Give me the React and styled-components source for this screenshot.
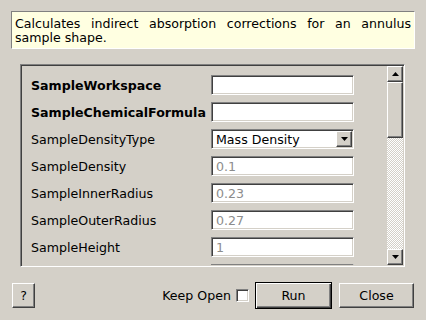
import React from 'react';
import styled, { createGlobalStyle, css } from 'styled-components';

const Global = createGlobalStyle`
  html, body { margin: 0; padding: 0; background: #d4d0c8; }
  body {
    font-family: "DejaVu Sans", "Liberation Sans", sans-serif;
    font-size: 12.6px;
    color: #000;
  }
  #root { width: 426px; height: 320px; }
`;

const sunken = css`
  border: 1px solid;
  border-color: #808080 #ffffff #ffffff #808080;
  box-shadow: inset 1px 1px 0 #404040, inset -1px -1px 0 #d4d0c8;
`;

const raised = css`
  border: 1px solid;
  border-color: #ffffff #404040 #404040 #ffffff;
  box-shadow: inset -1px -1px 0 #808080;
`;

const Dialog = styled.div`
  width: 426px;
  height: 320px;
  box-sizing: border-box;
  padding: 11px 11px 0 11px;
  display: flex;
  flex-direction: column;
  background: #d4d0c8;
`;

const Description = styled.div`
  background: #ffffe1;
  border: 1px solid;
  border-color: #808080 #ffffff #ffffff #808080;
  padding: 5px 3px 3px 3px;
  line-height: 14px;
`;

const DescLine = styled.div`
  text-align: ${p => (p.$justify ? 'justify' : 'left')};
  text-align-last: ${p => (p.$justify ? 'justify' : 'auto')};
  white-space: nowrap;
`;

const Panel = styled.div`
  margin: 15px 10px 0 9px;
  height: 203px;
  box-sizing: border-box;
  ${sunken};
  padding: 1px;
  display: flex;
  overflow: hidden;
`;

const Content = styled.div`
  flex: 1;
  overflow: hidden;
  padding: 9px 0 0 9px;
  display: grid;
  grid-template-columns: 180px 143px;
  grid-auto-rows: 20px;
  row-gap: 7px;
  align-content: start;
`;

const Label = styled.div`
  display: flex;
  align-items: center;
  font-weight: ${p => (p.$required ? 'bold' : 'normal')};
  white-space: nowrap;
`;

const TextBox = styled.div`
  box-sizing: border-box;
  height: 20px;
  ${sunken};
  padding: 0 0 0 4px;
  background: #fff;
  color: ${p => (p.$muted ? '#8c8c8c' : '#000')};
  display: flex;
  align-items: center;
`;

const Combo = styled(TextBox)`
  padding-right: 1px;
  justify-content: space-between;
`;

const DropButton = styled.div`
  width: 16px;
  height: 16px;
  box-sizing: border-box;
  ${raised};
  background: #d4d0c8;
  display: flex;
  align-items: center;
  justify-content: center;
`;

const Scrollbar = styled.div`
  width: 16px;
  display: flex;
  flex-direction: column;
`;

const ScrollButton = styled.div`
  height: 16px;
  box-sizing: border-box;
  ${raised};
  background: #d4d0c8;
  display: flex;
  align-items: center;
  justify-content: center;
`;

const Thumb = styled.div`
  height: 56px;
  box-sizing: border-box;
  ${raised};
  background: #d4d0c8;
`;

const Track = styled.div`
  flex: 1;
  background: repeating-conic-gradient(#ffffff 0 25%, #d4d0c8 0 50%) 0 0 / 2px 2px;
`;

const ButtonRow = styled.div`
  margin-top: 15px;
  height: 27px;
  padding: 0 1px;
  display: flex;
  align-items: center;
`;

const Spacer = styled.div`
  flex: ${p => (p.$w ? `0 0 ${p.$w}px` : '1')};
`;

const PushButton = styled.button`
  font-family: inherit;
  font-size: 12.6px;
  color: #000;
  background: #d4d0c8;
  box-sizing: border-box;
  height: 25px;
  width: ${p => p.$w}px;
  padding: 0;
  margin: 0;
  ${raised};
  ${p =>
    p.$default &&
    css`
      height: 27px;
      outline: none;
      border: 1px solid #000;
      box-shadow: inset 1px 1px 0 #fff, inset -1px -1px 0 #404040, inset -2px -2px 0 #808080;
    `}
`;

const CheckLabel = styled.label`
  display: flex;
  align-items: center;
  gap: 5px;
  margin-right: 6px;
  white-space: nowrap;
`;

const CheckBox = styled.span`
  width: 13px;
  height: 13px;
  box-sizing: border-box;
  ${sunken};
  background: #fff;
`;

const Arrow = ({ up }) => (
  <svg width="7" height="4" viewBox="0 0 7 4">
    <path d={up ? 'M3.5 0 L7 4 L0 4 Z' : 'M0 0 L7 0 L3.5 4 Z'} fill="#000" />
  </svg>
);

const rows = [
  { label: 'SampleWorkspace', required: true, value: '' },
  { label: 'SampleChemicalFormula', required: true, value: '' },
  { label: 'SampleDensityType', combo: 'Mass Density' },
  { label: 'SampleDensity', value: '0.1', muted: true },
  { label: 'SampleInnerRadius', value: '0.23', muted: true },
  { label: 'SampleOuterRadius', value: '0.27', muted: true },
  { label: 'SampleHeight', value: '1', muted: true },
  { label: '', value: '', muted: true },
];

export default function App() {
  return (
    <>
      <Global />
      <Dialog>
        <Description>
          <DescLine $justify>Calculates indirect absorption corrections for an annulus</DescLine>
          <DescLine>sample shape.</DescLine>
        </Description>
        <Panel>
          <Content>
            {rows.map((r, i) => (
              <React.Fragment key={i}>
                <Label $required={r.required}>{r.label}</Label>
                {r.combo ? (
                  <Combo>
                    <span>{r.combo}</span>
                    <DropButton>
                      <Arrow />
                    </DropButton>
                  </Combo>
                ) : (
                  <TextBox $muted={r.muted}>{r.value}</TextBox>
                )}
              </React.Fragment>
            ))}
          </Content>
          <Scrollbar>
            <ScrollButton>
              <Arrow up />
            </ScrollButton>
            <Thumb />
            <Track />
            <ScrollButton>
              <Arrow />
            </ScrollButton>
          </Scrollbar>
        </Panel>
        <ButtonRow>
          <PushButton $w={23}>?</PushButton>
          <Spacer />
          <CheckLabel>
            Keep Open
            <CheckBox />
          </CheckLabel>
          <PushButton $w={77} $default>Run</PushButton>
          <Spacer $w={7} />
          <PushButton $w={75}>Close</PushButton>
        </ButtonRow>
      </Dialog>
    </>
  );
}
